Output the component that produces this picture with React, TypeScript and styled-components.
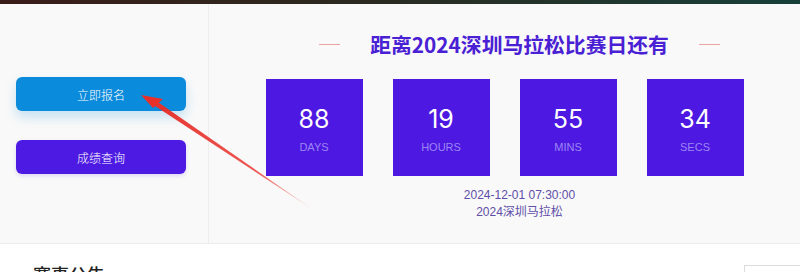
import React from "react";
import styled, { createGlobalStyle } from "styled-components";

const Global = createGlobalStyle`
  html, body { margin: 0; padding: 0; background: #ffffff; overflow: hidden; }
  body { font-family: "Liberation Sans", Arial, "Noto Sans CJK SC", sans-serif; }
  * { box-sizing: border-box; }
`;

const Page = styled.div`
  position: relative;
  width: 800px;
  height: 272px;
  overflow: hidden;
`;

const TopBar = styled.div`
  height: 4px;
  background: linear-gradient(to right, #3b1c19, #2b2a20 45%, #17403a);
`;

const Hero = styled.section`
  display: flex;
  height: 240px;
  background: #f9f9f9;
  border-bottom: 1px solid #ececec;
`;

const LeftCol = styled.div`
  width: 209px;
  flex-shrink: 0;
  border-right: 1px solid #ededed;
  padding: 73px 0 0 16px;
  display: flex;
  flex-direction: column;
  gap: 29px;
`;

const ActionButton = styled.button<{ $tone: "blue" | "purple" }>`
  width: 170px;
  height: 34px;
  border: none;
  border-radius: 6px;
  color: #ffffff;
  font-family: "Noto Sans CJK SC", sans-serif;
  font-weight: 300;
  font-size: 12px;
  cursor: pointer;
  background: ${(p) => (p.$tone === "blue" ? "#0b8bdc" : "#4c1ae2")};
  box-shadow: ${(p) =>
    p.$tone === "blue"
      ? "0 6px 12px rgba(11, 139, 220, 0.22)"
      : "0 2px 4px rgba(76, 26, 226, 0.15)"};
`;

const RightCol = styled.div`
  flex: 1;
  display: flex;
  flex-direction: column;
  align-items: center;
  padding: 25px 0 0 30px;
`;

const TitleRow = styled.div`
  display: flex;
  align-items: center;
  gap: 30px;
  height: 30px;
`;

const TitleLine = styled.span`
  width: 21px;
  height: 1px;
  background: #e8a4a4;
`;

const Title = styled.h1`
  margin: 0;
  font-family: "Noto Sans CJK SC", sans-serif;
  font-weight: 700;
  font-size: 20.8px;
  color: #4a20d4;
  letter-spacing: 0;
`;

const Boxes = styled.div`
  display: flex;
  gap: 30px;
  margin-top: 20px;
  margin-right: 30px;
`;

const CountBox = styled.div`
  width: 97px;
  height: 97px;
  background: #4d18e2;
  display: flex;
  flex-direction: column;
  align-items: center;
  padding-top: 24px;
`;

const Num = styled.div`
  font-family: "Inter", "Liberation Sans", sans-serif;
  font-weight: 400;
  font-size: 25px;
  line-height: 32px;
  color: #ffffff;
`;

const Label = styled.div`
  margin-top: 5px;
  font-family: "Liberation Sans", Arial, sans-serif;
  font-size: 11px;
  line-height: 14px;
  color: #9c86f2;
`;

const DateInfo = styled.div`
  margin-top: 11px;
  text-align: center;
  font-family: "Liberation Sans", Arial, "Noto Sans CJK SC", sans-serif;
  font-size: 12px;
  line-height: 17px;
  color: #5e4ea8;
`;

const Bottom = styled.section`
  display: flex;
  justify-content: space-between;
  padding: 18px 0 0 33px;
`;

const SectionTitle = styled.h2`
  margin: 0;
  font-family: "Noto Sans CJK SC", sans-serif;
  font-weight: 500;
  font-size: 18px;
  line-height: 24px;
  color: #222;
`;

const MoreBox = styled.div`
  width: 56px;
  height: 30px;
  margin-top: 3px;
  border: 1px solid #dcdcdc;
  border-right: none;
  background: #fff;
`;

const ArrowLayer = styled.svg`
  position: absolute;
  left: 0;
  top: 0;
  pointer-events: none;
`;

const counts = [
  { n: "88", l: "DAYS" },
  { n: "19", l: "HOURS" },
  { n: "55", l: "MINS" },
  { n: "34", l: "SECS" },
];

export default function App() {
  return (
    <Page>
      <Global />
      <TopBar />
      <Hero>
        <LeftCol>
          <ActionButton $tone="blue">立即报名</ActionButton>
          <ActionButton $tone="purple">成绩查询</ActionButton>
        </LeftCol>
        <RightCol>
          <TitleRow>
            <TitleLine />
            <Title>距离2024深圳马拉松比赛日还有</Title>
            <TitleLine />
          </TitleRow>
          <Boxes>
            {counts.map((c) => (
              <CountBox key={c.l}>
                <Num>{c.n}</Num>
                <Label>{c.l}</Label>
              </CountBox>
            ))}
          </Boxes>
          <DateInfo>
            2024-12-01 07:30:00
            <br />
            2024深圳马拉松
          </DateInfo>
        </RightCol>
      </Hero>
      <Bottom>
        <SectionTitle>赛事公告</SectionTitle>
        <MoreBox />
      </Bottom>
      <ArrowLayer width="800" height="272" viewBox="0 0 800 272">
        <defs>
          <linearGradient id="arrowFade" x1="318" y1="213" x2="142" y2="95" gradientUnits="userSpaceOnUse">
            <stop offset="0" stopColor="#e8302a" stopOpacity="0" />
            <stop offset="0.35" stopColor="#e8302a" stopOpacity="0.8" />
            <stop offset="1" stopColor="#e8302a" stopOpacity="1" />
          </linearGradient>
        </defs>
        <polygon points="318,213 152,104 155,100" fill="url(#arrowFade)" />
        <polygon points="141,95 163,99 153,108" fill="#e8302a" />
      </ArrowLayer>
    </Page>
  );
}
